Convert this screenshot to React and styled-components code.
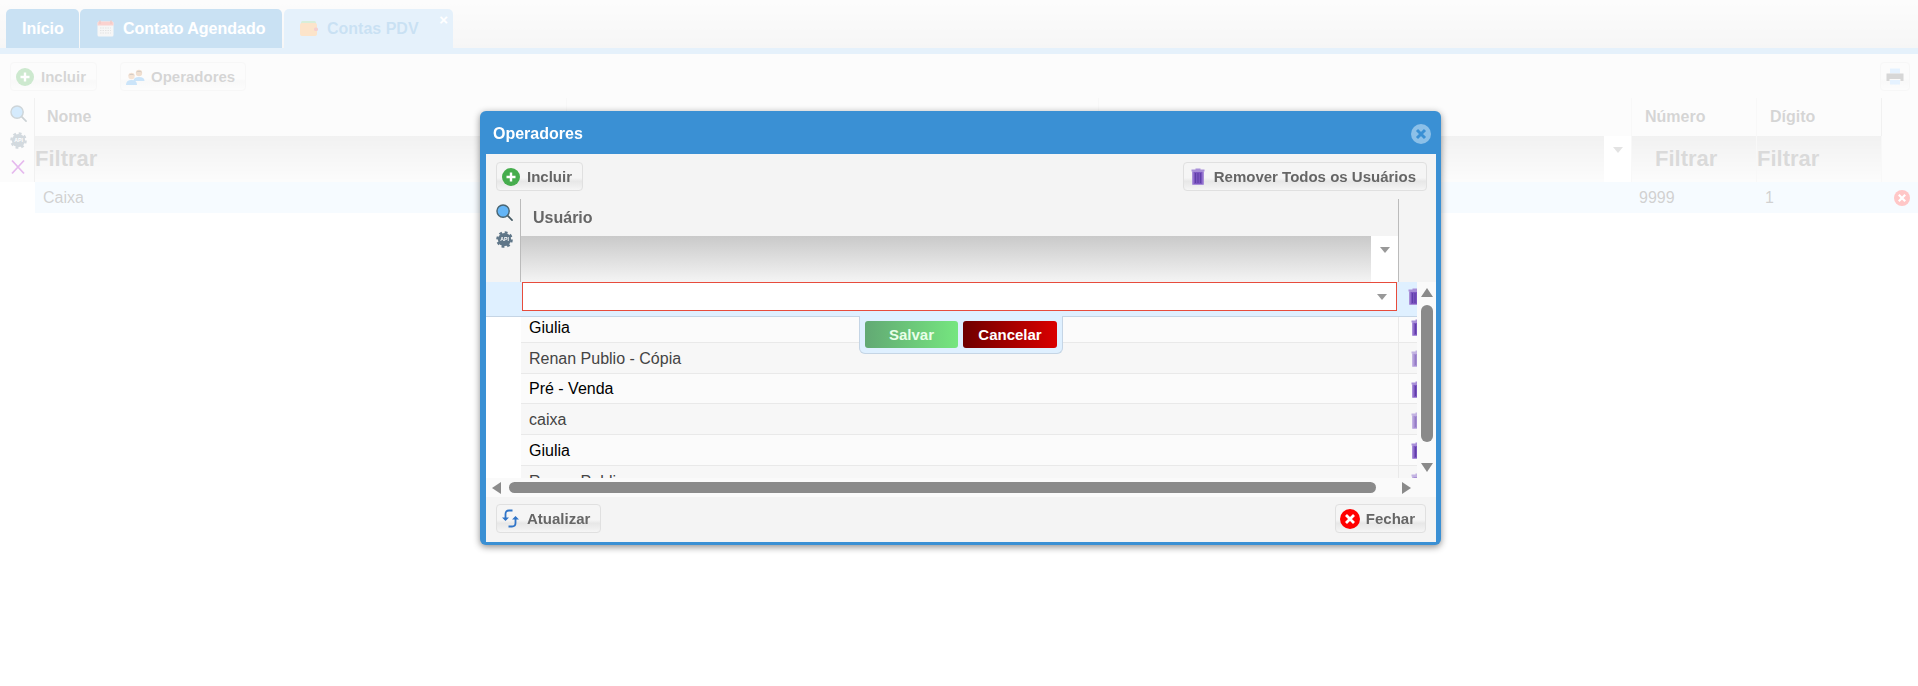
// Contas PDV page with the "Operadores" dialog open on top of it
import styled, { createGlobalStyle } from "styled-components";

const GlobalStyle = createGlobalStyle`
    html, body {
        margin: 0;
        padding: 0;
        height: 100%;
        overflow: hidden;
        background: #ffffff;
        font-family: "Liberation Sans", Arial, sans-serif;
    }
`;

const BLUE = "#3a90d4";

// Page behind the dialog
const Page = styled.div`
    width: 1918px;
    height: 686px;
    display: flex;
    flex-direction: column;
`;

const TabStrip = styled.div`
    height: 39px;
    padding: 9px 0 0 6px;
    display: flex;
    gap: 1px;
    background: linear-gradient(#f4f4f4, #dedede);
`;

const Tab = styled.div`
    position: relative;
    width: ${(p) => p.$width}px;
    box-sizing: border-box;
    margin-left: ${(p) => p.$gap || 0}px;
    padding-left: ${(p) => p.$indent}px;
    display: flex;
    align-items: center;
    gap: 9px;
    border-radius: 5px 5px 0 0;
    background: ${(p) => (p.$active ? "#a0ccf0" : BLUE)};
    color: ${(p) => (p.$active ? BLUE : "#ffffff")};
    font-size: 16px;
    font-weight: bold;
`;

const TabClose = styled.span`
    position: absolute;
    top: 4px;
    right: 5px;
    color: #ffffff;
    font-size: 15px;
    line-height: 14px;
`;

const TabBar = styled.div`
    height: 6px;
    background: #a0ccf0;
`;

const PageToolbar = styled.div`
    height: 44px;
    box-sizing: border-box;
    padding: 8px 8px 0 10px;
    display: flex;
    gap: 23px;
    background: #f4f4f4;
`;

const Spacer = styled.div`
    flex: 1;
`;

const ToolButton = styled.button`
    height: 29px;
    box-sizing: border-box;
    display: inline-flex;
    align-items: center;
    gap: ${(p) => p.$gap || 7}px;
    padding: 0 ${(p) => p.$right || 10}px 0 ${(p) => p.$left || 5}px;
    border: 1px solid #e0e0e0;
    border-radius: 4px;
    background: linear-gradient(#f5f5f5 0, #f5f5f5 55%, #e7e7e7 68%, #f5f5f5 100%);
    color: #666666;
    font-family: inherit;
    font-size: 15px;
    font-weight: bold;
    white-space: nowrap;
`;

const PageGrid = styled.div`
    display: flex;
    flex-direction: column;
`;

const PageHead = styled.div`
    display: flex;
    padding-left: 10px;
    background: #f4f4f4;
`;

const SideTools = styled.div`
    width: ${(p) => p.$width}px;
    flex: none;
    display: flex;
    flex-direction: column;
    align-items: flex-start;
    gap: 10px;
    padding: ${(p) => p.$top}px 0 0 ${(p) => p.$left || 0}px;
    box-sizing: border-box;
`;

const PageColumns = styled.div`
    display: grid;
    grid-template-columns: 532px 532px 533px 125px 125px;
    grid-template-rows: 38px 46px;
    border-left: 1px solid #cccccc;
`;

const HeadCell = styled.div`
    display: flex;
    align-items: center;
    box-sizing: border-box;
    padding-left: ${(p) => p.$indent || 12}px;
    border-right: ${(p) => (p.$last ? "1px solid #cccccc" : "1px solid #e4e4e4")};
    color: #666666;
    font-size: 16px;
    font-weight: bold;
`;

const FilterCell = styled.div`
    position: relative;
    box-sizing: border-box;
    padding-left: ${(p) => p.$indent || 0}px;
    display: flex;
    align-items: center;
    background: linear-gradient(#cccccc, #f4f4f4);
    border-right: 1px solid #e4e4e4;
    color: #777777;
    font-size: 22px;
    font-weight: bold;
`;

const SelectBox = styled.div`
    position: absolute;
    top: 0;
    right: 0;
    bottom: 0;
    width: 27px;
    background: #ffffff;
    display: flex;
    justify-content: center;
    padding-top: 11px;
    box-sizing: border-box;
`;

const DownArrow = styled.span`
    display: block;
    width: 0;
    height: 0;
    border-left: 5px solid transparent;
    border-right: 5px solid transparent;
    border-top: 6px solid #999999;
`;

const PageRow = styled.div`
    height: 31px;
    margin-left: 35px;
    display: grid;
    grid-template-columns: 532px 532px 533px 125px 125px 36px;
    background: #dff0ff;
    color: #555555;
    font-size: 16px;
`;

const PageCell = styled.div`
    display: flex;
    align-items: center;
    box-sizing: border-box;
    padding-left: ${(p) => p.$indent || 8}px;
`;

// White veil that fades the page while the dialog is open
const Veil = styled.div`
    position: fixed;
    inset: 0;
    background: rgba(255, 255, 255, 0.73);
`;

const Dialog = styled.div`
    position: fixed;
    left: 480px;
    top: 111px;
    width: 961px;
    height: 434px;
    display: flex;
    flex-direction: column;
    border-radius: 6px;
    background: ${BLUE};
    box-shadow: 0 2px 7px rgba(0, 0, 0, 0.45);
`;

const DialogTitle = styled.div`
    height: 43px;
    flex: none;
    box-sizing: border-box;
    display: flex;
    align-items: center;
    justify-content: space-between;
    padding: 2px 10px 0 13px;
    color: #ffffff;
    font-size: 16px;
    font-weight: bold;
`;

const DialogBody = styled.div`
    flex: 1;
    margin: 0 5px 3px 6px;
    display: flex;
    flex-direction: column;
    background: #f4f4f4;
    min-height: 0;
`;

const DialogBar = styled.div`
    height: 45px;
    flex: none;
    box-sizing: border-box;
    padding: ${(p) => (p.$footer ? "7px 10px 0" : "8px 9px 0 10px")};
    display: flex;
    justify-content: space-between;
    align-items: flex-start;
`;

const GridHead = styled.div`
    height: 83px;
    flex: none;
    display: flex;
`;

const HeadColumn = styled.div`
    width: 879px;
    box-sizing: border-box;
    border-left: 1px solid #bbbbbb;
    border-right: 1px solid #bbbbbb;
    display: flex;
    flex-direction: column;
`;

const HeadTitle = styled.div`
    height: 37px;
    display: flex;
    align-items: center;
    padding-left: 12px;
    box-sizing: border-box;
    color: #666666;
    font-size: 16px;
    font-weight: bold;
`;

const HeadFilter = styled.div`
    position: relative;
    flex: 1;
    background: linear-gradient(#c9c9c9, #f4f4f4);
`;

const GridMain = styled.div`
    height: 196px;
    flex: none;
    display: flex;
`;

const Viewport = styled.div`
    position: relative;
    width: 931px;
    flex: none;
    overflow: hidden;
    background: #ffffff;
`;

const EditRow = styled.div`
    position: relative;
    z-index: 1;
    height: 35px;
    box-sizing: border-box;
    padding-left: 36px;
    display: flex;
    background: #dff0ff;
    border-bottom: 1px solid #c5d5e5;
`;

const EditInput = styled.div`
    width: 875px;
    height: 29px;
    flex: none;
    box-sizing: border-box;
    display: flex;
    align-items: center;
    justify-content: flex-end;
    padding-right: 9px;
    border: 1px solid #e74c3c;
    background: #ffffff;
`;

const EditTrash = styled.div`
    padding: 6px 0 0 11px;
`;

const SavePopup = styled.div`
    position: absolute;
    z-index: 2;
    left: 373px;
    top: 34px;
    width: 204px;
    height: 38px;
    box-sizing: border-box;
    padding: 5px 5px 0;
    display: flex;
    justify-content: space-between;
    background: #dff0ff;
    border: 1px solid #c5d5e5;
    border-top: none;
    border-radius: 0 0 6px 6px;
`;

const PopupButton = styled.button`
    width: ${(p) => p.$width}px;
    height: 27px;
    border: none;
    border-radius: 3px;
    background: ${(p) => p.$fill};
    color: ${(p) => p.$color};
    font-family: inherit;
    font-size: 15px;
    font-weight: bold;
`;

const Rows = styled.div`
    margin-top: -5px;
    padding-left: 35px;
`;

const DataRow = styled.div`
    height: 30.75px;
    box-sizing: border-box;
    display: grid;
    grid-template-columns: 878px 1fr;
    border-bottom: 1px solid #e9e9e9;
    background: ${(p) => (p.$odd ? "#f7f7f7" : "#fbfbfb")};
    color: ${(p) => (p.$odd ? "#444444" : "#000000")};
    font-size: 16px;
`;

const NameCell = styled.div`
    display: flex;
    align-items: center;
    padding: 2px 0 0 8px;
    border-right: 1px solid #e9e9e9;
`;

const TrashCell = styled.div`
    display: flex;
    align-items: center;
    padding: 2px 0 0 12px;
    opacity: ${(p) => (p.$odd ? 0.65 : 1)};
`;

const VScroll = styled.div`
    width: 19px;
    flex: none;
    box-sizing: border-box;
    padding: 6px 0 0 3.5px;
    background: #fafafa;
    display: flex;
    flex-direction: column;
`;

const Triangle = styled.span`
    display: block;
    width: 0;
    height: 0;
    flex: none;
    border-style: solid;
    border-color: transparent;
    border-width: ${(p) =>
        p.$dir === "up" ? "0 6.5px 9px" : p.$dir === "down" ? "9px 6.5px 0" : p.$dir === "left" ? "6px 9px 6px 0" : "6px 0 6px 9px"};
    ${(p) =>
        p.$dir === "up"
            ? "border-bottom-color: #8a8a8a;"
            : p.$dir === "down"
            ? "border-top-color: #8a8a8a;"
            : p.$dir === "left"
            ? "border-right-color: #8a8a8a;"
            : "border-left-color: #8a8a8a;"}
`;

const VThumb = styled.div`
    width: 12px;
    height: 137px;
    margin: 8px 0 21px 0.5px;
    border-radius: 6px;
    background: #8a8a8a;
`;

const HScroll = styled.div`
    height: 19px;
    flex: none;
    box-sizing: border-box;
    padding-left: 6px;
    display: flex;
    align-items: center;
    background: #fafafa;
`;

const HThumb = styled.div`
    width: 867px;
    height: 11px;
    margin: 0 26px 0 8px;
    border-radius: 6px;
    background: #8a8a8a;
`;

// Icons drawn to match the originals
const AddIcon = () => (
    <svg width="18" height="18" viewBox="0 0 18 18">
        <circle cx="9" cy="9" r="9" fill="#46ad4d" />
        <path d="M9 4.5v9M4.5 9h9" stroke="#fff" strokeWidth="2.4" />
    </svg>
);

const SearchIcon = () => (
    <svg width="17" height="17" viewBox="0 0 18 18">
        <path d="M11.5 11.5L17 17" stroke="#455a64" strokeWidth="1.8" strokeLinecap="round" />
        <circle cx="7.5" cy="7.5" r="6.5" fill="#64b5f6" stroke="#4a6572" strokeWidth="1.5" />
    </svg>
);

const GearIcon = () => (
    <svg width="17" height="17" viewBox="0 0 18 18">
        <circle cx="9" cy="9" r="7" fill="#5f7688" />
        <circle cx="9" cy="9" r="7.6" fill="none" stroke="#5f7688" strokeWidth="2.4" strokeDasharray="3 2.97" />
        <text x="9" y="11" textAnchor="middle" fontSize="5.5" fontWeight="bold" fill="#ffffff" fontFamily="Liberation Sans, sans-serif">
            API
        </text>
    </svg>
);

const CrossIcon = () => (
    <svg width="16" height="16" viewBox="0 0 16 16">
        <path d="M2 1.5l12 13M14 1.5l-12 13" stroke="#a000c0" strokeWidth="1.8" />
    </svg>
);

const TrashIcon = () => (
    <svg width="14" height="17" viewBox="0 0 14 17" style={{ display: "block", flex: "none" }}>
        <path d="M4.5 0.5h5v1.5h-5z" fill="#a88fd8" />
        <path d="M0.5 1.5h13v2h-13z" fill="#a88fd8" />
        <rect x="1" y="3" width="12" height="14" rx="1" fill="#a88fd8" />
        <rect x="2.5" y="4" width="9" height="12" fill="#7e57c2" />
        <path d="M4.5 5v10M7 5v10M9.5 5v10" stroke="#5f3fa8" strokeWidth="1.2" />
    </svg>
);

const RefreshIcon = () => (
    <svg width="17" height="19" viewBox="0 0 17 19">
        <path d="M3.5 9V5Q3.5 1.5 7 1.5H10.5" fill="none" stroke="#2f74c8" strokeWidth="1.8" />
        <path d="M13.5 10v4Q13.5 17.5 10 17.5H6.5" fill="none" stroke="#2f74c8" strokeWidth="1.8" />
        <path d="M0 8.5h7l-3.5 3.5zM10 10.5h7l-3.5-3.5z" fill="#2f74c8" />
    </svg>
);

const CloseRoundIcon = ({ size = 20, fill = "#ff0000", mark = "#ffffff", width = 2.8 }) => (
    <svg width={size} height={size} viewBox="0 0 20 20" style={{ flex: "none" }}>
        <circle cx="10" cy="10" r="10" fill={fill} />
        <path d="M6 6l8 8M14 6l-8 8" stroke={mark} strokeWidth={width} />
    </svg>
);

const PrinterIcon = () => (
    <svg width="18" height="17" viewBox="0 0 18 17">
        <path d="M4 0.5h10v5H4z" fill="#9fd0ff" />
        <path d="M0.5 5.5h17v7.5h-3v-2h-11v2h-3z" fill="#6b6b6b" />
        <path d="M4 12h10v4.5H4z" fill="#9fd0ff" />
    </svg>
);

const CalendarIcon = () => (
    <svg width="17" height="17" viewBox="0 0 17 17">
        <rect x="0.5" y="1.5" width="16" height="15" rx="1.5" fill="#dddddd" />
        <path d="M0.5 3q0-1.5 1.5-1.5h13q1.5 0 1.5 1.5V5.5H0.5z" fill="#f05a50" />
        <path d="M3 4V0.5M14 4V0.5" stroke="#c0392b" strokeWidth="1.4" />
        <path d="M3 8h11M3 10.5h11M3 13h11" stroke="#999999" strokeWidth="1.2" strokeDasharray="1.5 1" />
    </svg>
);

const WalletIcon = () => (
    <svg width="18" height="15" viewBox="0 0 18 15">
        <rect x="1" y="0" width="15" height="6" rx="1.5" fill="#6fbf73" />
        <rect x="0" y="2" width="17" height="13" rx="2" fill="#f39a3c" />
        <rect x="14" y="6.5" width="4" height="3.5" rx="1.5" fill="#d9534f" />
    </svg>
);

const UsersIcon = () => (
    <svg width="19" height="16" viewBox="0 0 19 16">
        <circle cx="13" cy="4" r="3.2" fill="#c98a52" />
        <path d="M9.8 3.5q3.2-3.5 6.4 0q-3.2-1.5-6.4 0z" fill="#4a3320" />
        <path d="M7.5 12q0-4 5.5-4t5.5 4z" fill="#3f9bea" />
        <circle cx="5.5" cy="7" r="3.2" fill="#d99a66" />
        <path d="M2.3 6.5q3.2-3.5 6.4 0q-3.2-1.5-6.4 0z" fill="#4a3320" />
        <path d="M0 16q0-5 5.5-5t5.5 5z" fill="#3f9bea" />
    </svg>
);

const USERS = [
    { name: "Giulia", odd: false },
    { name: "Renan Publio - Cópia", odd: true },
    { name: "Pré - Venda", odd: false },
    { name: "caixa", odd: true },
    { name: "Giulia", odd: false },
    { name: "Renan Publio", odd: true },
];

function BackgroundPage() {
    return (
        <Page>
            <TabStrip>
                <Tab $width={73} $indent={16}>Início</Tab>
                <Tab $width={202} $indent={17}>
                    <CalendarIcon />
                    Contato Agendado
                </Tab>
                <Tab $width={169} $gap={1} $indent={16} $active>
                    <WalletIcon />
                    Contas PDV
                    <TabClose>×</TabClose>
                </Tab>
            </TabStrip>
            <TabBar />
            <PageToolbar>
                <ToolButton>
                    <AddIcon />
                    Incluir
                </ToolButton>
                <ToolButton $gap={6}>
                    <UsersIcon />
                    Operadores
                </ToolButton>
                <Spacer />
                <ToolButton $left={5} $right={5}>
                    <PrinterIcon />
                </ToolButton>
            </PageToolbar>
            <PageGrid>
                <PageHead>
                    <SideTools $width={24} $top={7}>
                        <SearchIcon />
                        <GearIcon />
                        <CrossIcon />
                    </SideTools>
                    <PageColumns>
                        <HeadCell>Nome</HeadCell>
                        <HeadCell />
                        <HeadCell />
                        <HeadCell $indent={13}>Número</HeadCell>
                        <HeadCell $indent={13} $last>Dígito</HeadCell>
                        <FilterCell>Filtrar</FilterCell>
                        <FilterCell />
                        <FilterCell>
                            <SelectBox>
                                <DownArrow />
                            </SelectBox>
                        </FilterCell>
                        <FilterCell $indent={23}>Filtrar</FilterCell>
                        <FilterCell>Filtrar</FilterCell>
                    </PageColumns>
                </PageHead>
                <PageRow>
                    <PageCell>Caixa</PageCell>
                    <PageCell />
                    <PageCell />
                    <PageCell $indent={7}>9999</PageCell>
                    <PageCell>1</PageCell>
                    <PageCell $indent={12}>
                        <CloseRoundIcon size={16} fill="#ff3030" />
                    </PageCell>
                </PageRow>
            </PageGrid>
        </Page>
    );
}

function OperatorsDialog() {
    return (
        <Dialog>
            <DialogTitle>
                Operadores
                <CloseRoundIcon fill="#8cc0e8" mark={BLUE} width={3} />
            </DialogTitle>
            <DialogBody>
                <DialogBar>
                    <ToolButton>
                        <AddIcon />
                        Incluir
                    </ToolButton>
                    <ToolButton $left={7} $gap={9}>
                        <TrashIcon />
                        Remover Todos os Usuários
                    </ToolButton>
                </DialogBar>
                <GridHead>
                    <SideTools $width={34} $top={5} $left={10}>
                        <SearchIcon />
                        <GearIcon />
                    </SideTools>
                    <HeadColumn>
                        <HeadTitle>Usuário</HeadTitle>
                        <HeadFilter>
                            <SelectBox>
                                <DownArrow />
                            </SelectBox>
                        </HeadFilter>
                    </HeadColumn>
                </GridHead>
                <GridMain>
                    <Viewport>
                        <EditRow>
                            <EditInput>
                                <DownArrow />
                            </EditInput>
                            <EditTrash>
                                <TrashIcon />
                            </EditTrash>
                        </EditRow>
                        <SavePopup>
                            <PopupButton $width={93} $color="#e8ffe8" $fill="linear-gradient(to right, #62a974, #75e67f)">
                                Salvar
                            </PopupButton>
                            <PopupButton $width={94} $color="#ffffff" $fill="linear-gradient(to right, #6e0000, #da0000)">
                                Cancelar
                            </PopupButton>
                        </SavePopup>
                        <Rows>
                            {USERS.map((user, index) => (
                                <DataRow key={index} $odd={user.odd}>
                                    <NameCell>{user.name}</NameCell>
                                    <TrashCell $odd={user.odd}>
                                        <TrashIcon />
                                    </TrashCell>
                                </DataRow>
                            ))}
                        </Rows>
                    </Viewport>
                    <VScroll>
                        <Triangle $dir="up" />
                        <VThumb />
                        <Triangle $dir="down" />
                    </VScroll>
                </GridMain>
                <HScroll>
                    <Triangle $dir="left" />
                    <HThumb />
                    <Triangle $dir="right" />
                </HScroll>
                <DialogBar $footer>
                    <ToolButton $gap={8}>
                        <RefreshIcon />
                        Atualizar
                    </ToolButton>
                    <ToolButton $left={4} $gap={6}>
                        <CloseRoundIcon />
                        Fechar
                    </ToolButton>
                </DialogBar>
            </DialogBody>
        </Dialog>
    );
}

export default function App() {
    return (
        <>
            <GlobalStyle />
            <BackgroundPage />
            <Veil />
            <OperatorsDialog />
        </>
    );
}
